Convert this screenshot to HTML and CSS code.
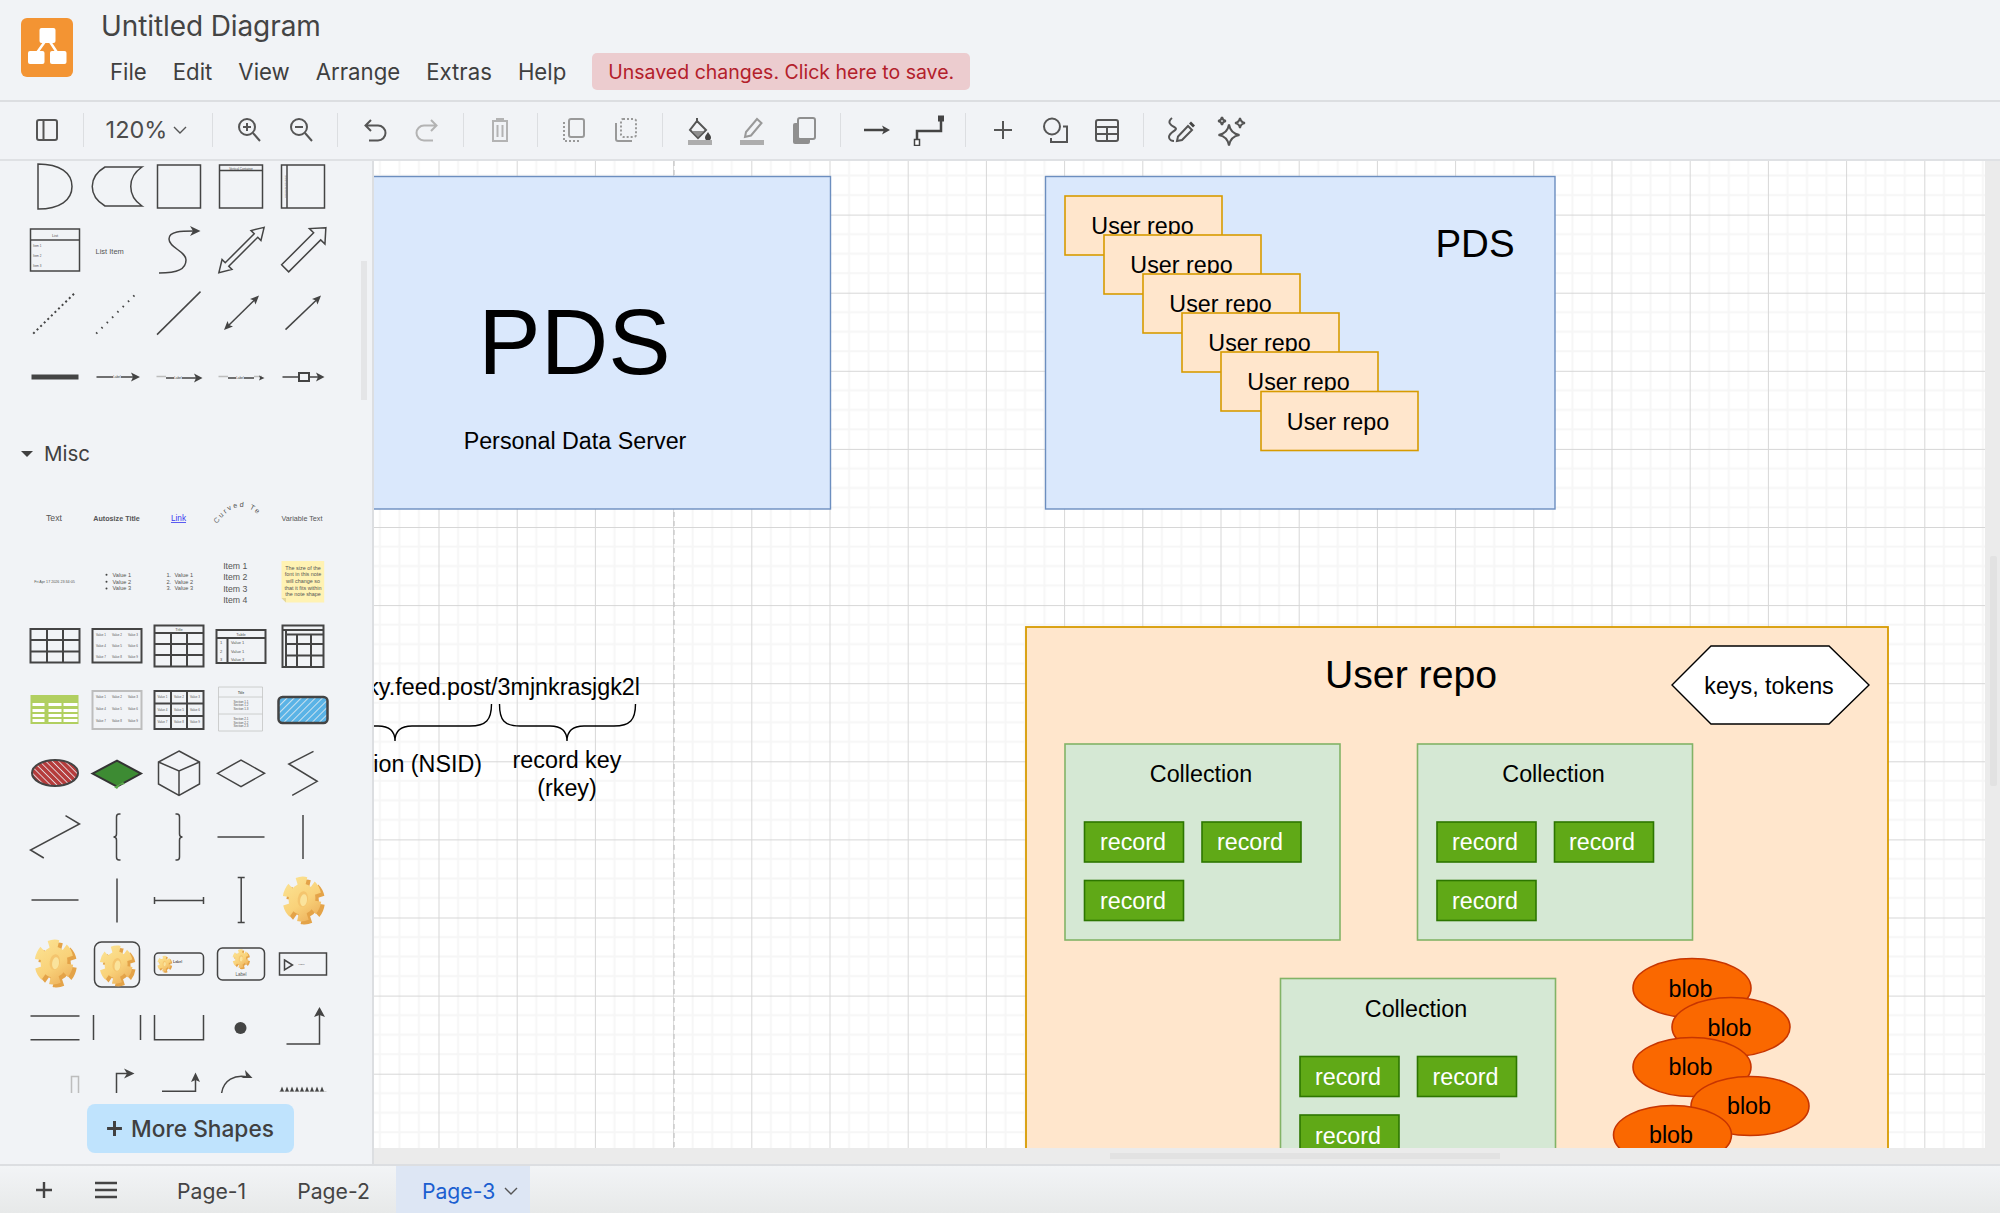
FILE: index.html
```html
<!DOCTYPE html>
<html lang="en">
<head>
<meta charset="utf-8">
<title>Untitled Diagram</title>
<link rel="stylesheet" href="styles.css">
</head>
<body>
<svg class="defs" width="0" height="0" aria-hidden="true">
  <defs>
    <linearGradient id="gearGrad" gradientUnits="userSpaceOnUse" x1="-14" y1="-18" x2="16" y2="18">
      <stop offset="0" stop-color="#fbe08f"/><stop offset=".55" stop-color="#f9d27a"/><stop offset="1" stop-color="#eeb45e"/>
    </linearGradient>
    <symbol id="gear" viewBox="-24 -24 48 48" overflow="visible">
      <g transform="translate(2.500 2) rotate(8) scale(.86 1)">
        <circle r="18" class="gear-teeth dark-gear"/>
        <circle r="15.500" class="gear-dark"/>
      </g>
      <g transform="translate(-1 -1) rotate(8) scale(.86 1)">
        <circle r="18" class="gear-teeth"/>
        <circle r="15.500" class="gear-body"/>
        <ellipse cx="1" cy="0" rx="6" ry="8" class="gear-hole"/>
        <ellipse cx="2" cy="1" rx="4" ry="6" class="gear-hole-in"/>
      </g>
    </symbol>
    <pattern id="hatchBlue" width="5" height="5" patternUnits="userSpaceOnUse" patternTransform="rotate(45)">
      <rect width="5" height="5" class="hatch-blue"/><rect width=".8" height="5" class="hatch-line"/>
    </pattern>
    <pattern id="hatchRed" width="4.500" height="4.500" patternUnits="userSpaceOnUse" patternTransform="rotate(-45)">
      <rect width="4.500" height="4.500" class="hatch-red"/><rect width=".8" height="4.500" class="hatch-line"/>
    </pattern>
    <pattern id="grid" x="438.5" y="292.7" width="78.2" height="78.1" patternUnits="userSpaceOnUse">
      <path class="grid-minor" d="M19.55 0V78.1M39.1 0V78.1M58.65 0V78.1M0 19.52H78.2M0 39.05H78.2M0 58.57H78.2"/>
      <path class="grid-major" d="M.3 0V78.1M0 .3H78.2"/>
    </pattern>
  </defs>
</svg>
<div class="app">
  <header class="header">
    <svg class="logo" viewBox="0 0 52 59">
      <rect width="52" height="59" rx="6" class="logo-bg"/>
      <path class="logo-line" d="M26.5 20 15 36M26.5 20 37 36"/>
      <rect x="18.5" y="10" width="16" height="15" rx="2" class="logo-node"/>
      <rect x="7" y="33" width="16.5" height="13" rx="2" class="logo-node"/>
      <rect x="29" y="33" width="16.5" height="13" rx="2" class="logo-node"/>
    </svg>
    <div class="titles">
      <div class="doc-title">Untitled Diagram</div>
      <nav class="menu">
        <span>File</span><span>Edit</span><span>View</span><span>Arrange</span><span>Extras</span><span>Help</span>
        <span class="unsaved">Unsaved changes. Click here to save.</span>
      </nav>
    </div>
  </header>

  <div class="toolbar">
    <div class="tgroup first">
      <svg class="ic" viewBox="0 0 32 32"><rect x="6" y="6" width="20" height="20" rx="2" class="i"/><path class="i" d="M12.5 6V26"/></svg>
    </div>
    <i class="sep"></i>
    <div class="tgroup zoomgroup"><span>120%</span>
      <svg class="chev" viewBox="0 0 14 8"><path d="M1 1 7 7 13 1" class="i thin"/></svg>
    </div>
    <i class="sep"></i>
    <div class="tgroup">
      <svg class="ic" viewBox="0 0 32 32"><circle cx="14" cy="13" r="8" class="i"/><path class="i" d="M20 19 27 27M14 9V17M10 13H18"/></svg>
      <svg class="ic" viewBox="0 0 32 32"><circle cx="14" cy="13" r="8" class="i"/><path class="i" d="M20 19 27 27M10 13H18"/></svg>
    </div>
    <i class="sep"></i>
    <div class="tgroup">
      <svg class="ic" viewBox="0 0 32 32"><path class="i" d="M12 6 6.500 11.500 12 17M7 11.500H19A7.500 7.500 0 0 1 19 26.500H10"/></svg>
      <svg class="ic" viewBox="0 0 32 32"><path class="i off" d="M20 6 25.500 11.500 20 17M25 11.500H13A7.500 7.500 0 0 0 13 26.500H22"/></svg>
    </div>
    <i class="sep"></i>
    <div class="tgroup">
      <svg class="ic" viewBox="0 0 32 32"><path class="i off" d="M8 7H24M13 7V5H19V7M9 7H23V27H9ZM13.500 11V23M18.500 11V23"/></svg>
    </div>
    <i class="sep"></i>
    <div class="tgroup">
      <svg class="ic" viewBox="0 0 32 32"><rect x="11" y="5" width="15" height="18" rx="2" class="i mid"/><path class="i mid dots" d="M6 8V27H22"/></svg>
      <svg class="ic" viewBox="0 0 32 32"><path class="i mid" d="M6 9V25A2 2 0 0 0 8 27H22"/><rect x="11" y="5" width="15" height="18" rx="2" class="i mid dots"/></svg>
    </div>
    <i class="sep"></i>
    <div class="tgroup">
      <svg class="ic" viewBox="0 0 32 32"><path class="i" d="M13 4V9"/><path d="M13 7 22 16 14 24 6 16Z" class="i"/><path d="M8 17H20L14 23Z" class="fill-mid"/><path d="M24 18C26 21 27 22 27 23.500A3 3 0 0 1 21 23.500C21 22 22 21 24 18Z" class="fill-dark"/><rect x="4" y="26" width="24" height="5" class="fill-bar"/></svg>
      <svg class="ic" viewBox="0 0 32 32"><path class="i mid" d="M9 23 10 18 21 5 25.500 9 15 21.500Z"/><rect x="4" y="26" width="24" height="5" class="fill-bar"/></svg>
      <svg class="ic" viewBox="0 0 32 32"><rect x="5" y="9" width="17" height="21" rx="2" class="fill-mid"/><rect x="10" y="4" width="17" height="21" rx="2" class="shadow-front"/></svg>
    </div>
    <i class="sep"></i>
    <div class="tgroup">
      <svg class="ic" viewBox="0 0 32 32"><path class="i dark" d="M3 16H24"/><path class="fill-dark" d="M29 16 21 11.500 23 16 21 20.500Z"/></svg>
      <svg class="ic" viewBox="0 0 32 32"><path class="i dark" d="M4 29V17H28V4"/><rect x="25" y="1.500" width="6" height="6" class="fill-dark"/><rect x="1.500" y="25.500" width="5" height="6" class="fill-outline"/></svg>
    </div>
    <i class="sep"></i>
    <div class="tgroup">
      <svg class="ic" viewBox="0 0 32 32"><path class="i" d="M16 7V25M7 16H25"/></svg>
      <svg class="ic" viewBox="0 0 32 32"><circle cx="13" cy="12.500" r="8" class="i"/><path class="i" d="M24 12.500H28V28H12V24"/></svg>
      <svg class="ic" viewBox="0 0 32 32"><rect x="5" y="6" width="22" height="21" rx="2" class="i"/><path class="i" d="M5 13H27M5 20H27M16 13V27"/></svg>
    </div>
    <i class="sep"></i>
    <div class="tgroup">
      <svg class="ic" viewBox="0 0 32 32"><path class="i" d="M8 4C3 8 6 11 11 13.500C15 16 5 18 5 23C5 26 8 27 10 27"/><path class="i" d="M13 27 14 22.500 24 12 28 16 18 26Z"/><path class="fill-dark" d="M25 9.500 27 7.500 31 11.500 29 13.500Z"/></svg>
      <svg class="ic" viewBox="0 0 32 32"><path class="i" d="M13 10.500Q14.500 19.500 23.500 21Q14.500 22.500 13 31.500Q11.500 22.500 2.500 21Q11.500 19.500 13 10.500Z"/><path class="i" d="M6 3Q6.500 6.500 10 7Q6.500 7.500 6 11Q5.500 7.500 2 7Q5.500 6.500 6 3Z"/><path class="i" d="M24 4Q24.700 8.300 29 9Q24.700 9.700 24 14Q23.300 9.700 19 9Q23.300 8.300 24 4Z"/></svg>
    </div>
  </div>

  <main class="main">
    <aside class="sidebar">
      <div class="shapes">
        <div class="grid-shapes first-grid">
          <svg viewBox="0 0 62 64"><path class="s" d="M14 9C36 9 48 18 48 31.500 48 45 36 54 14 54Z"/></svg>
          <svg viewBox="0 0 62 64"><path class="s" d="M19 12H56C41 22 41 41 56 51H19C2 41 2 22 19 12Z"/></svg>
          <svg viewBox="0 0 62 64"><rect class="s" x="9.500" y="10" width="43" height="43"/></svg>
          <svg viewBox="0 0 62 64"><rect class="s" x="9.500" y="10" width="43" height="43"/><path class="s" d="M9.500 15.500H52.500"/><text x="31" y="14.500" class="tx t3 mid-a">Vertical Container</text></svg>
          <svg viewBox="0 0 62 64"><rect class="s" x="9.500" y="10" width="43" height="43"/><path class="s" d="M15 10V53"/><text x="13.800" y="31.500" transform="rotate(-90 13.800 31.500)" class="tx t25 mid-a">Horizontal Container</text></svg>

          <svg viewBox="0 0 62 64"><rect class="s" x="6.500" y="10" width="49" height="42"/><path class="s" d="M6.500 21H55.500"/><text x="31" y="17.500" class="tx t4 mid-a">List</text><text x="9" y="27.500" class="tx t3">Item 1</text><text x="9" y="37.500" class="tx t3">Item 2</text><text x="9" y="47.500" class="tx t3">Item 3</text></svg>
          <svg viewBox="0 0 62 64"><text x="9.500" y="34.500" class="tx t75">List Item</text></svg>
          <svg viewBox="0 0 62 64"><path class="s" d="M11 54C30 54 38 50 38 41 38 32 21 29 21 20 21 12 34 12 46 12"/><path class="f" d="M52.500 12 42 7 45 12 42 17Z"/></svg>
          <svg viewBox="0 0 62 64"><path class="s" transform="rotate(-45 31.500 31)" d="M63.500 31 52 24V28.500H11V24L-.5 31 11 38V33.500H52V38Z"/></svg>
          <svg viewBox="0 0 62 64"><path class="s" transform="rotate(-45 33.500 29)" d="M62.300 29 50 18V24H4.700V34H50V40Z"/></svg>

          <svg viewBox="0 0 62 64"><path class="s dot1" d="M9.200 51.600 51.500 10.300"/></svg>
          <svg viewBox="0 0 62 64"><path class="s dot2" d="M10.200 51.600 49 12.800"/></svg>
          <svg viewBox="0 0 62 64"><path class="s" d="M9 52.600 52.500 9.600"/></svg>
          <svg viewBox="0 0 62 64"><path class="s" d="M18 44 45 17.500"/><path class="f" d="M49 13.600 40 17 44 18.500 45.500 22.500ZM14 48 23 44.500 19 43 17.500 39Z"/></svg>
          <svg viewBox="0 0 62 64"><path class="s" d="M13.500 47.600 45 17.500"/><path class="f" d="M49 13.600 40 17 44 18.500 45.500 22.500Z"/></svg>

          <svg viewBox="0 0 62 64"><path class="s thick" d="M7.500 31H54.500"/></svg>
          <svg viewBox="0 0 62 64"><path class="s" d="M10.500 31H27M35 31H48"/><path class="f" d="M54 31 45 26.500 47 31 45 35.500Z"/><text x="31" y="32" class="tx t3 dk mid-a">Label</text></svg>
          <svg viewBox="0 0 62 64"><path class="s" d="M18 32H26M34 32H48"/><path class="f" d="M54.500 32 46 27.500 48 32 46 36.500Z"/><path class="s light" d="M8.500 30.500H18"/><text x="30" y="33" class="tx t3 dk mid-a">Label</text></svg>
          <svg viewBox="0 0 62 64"><path class="s" d="M18 32H26M34 32H44"/><path class="s light" d="M8.500 30.500H18M44 30.500H52"/><path class="f" d="M54.500 32 49 29.500 50 32 49 34.500Z"/><text x="30" y="33" class="tx t3 dk mid-a">Label</text></svg>
          <svg viewBox="0 0 62 64"><path class="s" d="M10.500 31H27M37 31H47"/><rect class="s box" x="27" y="27" width="10" height="8"/><path class="f" d="M52.500 31 44 26.500 46 31 44 35.500Z"/></svg>
        </div>

        <div class="section-head"><i class="caret"></i><span>Misc</span></div>

        <div class="grid-shapes">
          <svg viewBox="0 0 62 64"><text x="30" y="35" class="tx t87 mid-a">Text</text></svg>
          <svg viewBox="0 0 62 64"><text x="30.500" y="35" class="tx t7 bold mid-a">Autosize Title</text></svg>
          <svg viewBox="0 0 62 64"><text x="30.500" y="35" class="tx t8 mid-a link">Link</text></svg>
          <svg viewBox="0 0 62 64"><path id="curve" class="nofill" d="M7 38Q31 2 60 42"/><text class="tx t7 spaced"><textPath href="#curve">Curved Te</textPath></text></svg>
          <svg viewBox="0 0 62 64"><text x="30" y="35" class="tx t7 mid-a">Variable Text</text></svg>

          <svg viewBox="0 0 62 64"><text x="30.500" y="33.500" class="tx t37 mid-a">Fri Apr 17 2026 23:34:05</text></svg>
          <svg viewBox="0 0 62 64"><circle cx="20.500" cy="25.700" r="1" class="f"/><circle cx="20.500" cy="32.700" r="1" class="f"/><circle cx="20.500" cy="39.400" r="1" class="f"/><text x="26.500" y="27.700" class="tx t56">Value 1</text><text x="26.500" y="34.700" class="tx t56">Value 2</text><text x="26.500" y="41.400" class="tx t56">Value 3</text></svg>
          <svg viewBox="0 0 62 64"><text x="18.500" y="27.700" class="tx t56">1.</text><text x="18.500" y="34.700" class="tx t56">2.</text><text x="18.500" y="41.400" class="tx t56">3.</text><text x="26.500" y="27.700" class="tx t56">Value 1</text><text x="26.500" y="34.700" class="tx t56">Value 2</text><text x="26.500" y="41.400" class="tx t56">Value 3</text></svg>
          <svg viewBox="0 0 62 64"><text x="13.200" y="20" class="tx t87">Item 1</text><text x="13.200" y="31" class="tx t87">Item 2</text><text x="13.200" y="42.500" class="tx t87">Item 3</text><text x="13.200" y="53.500" class="tx t87">Item 4</text></svg>
          <svg viewBox="0 0 62 64"><path class="note" d="M9.500 12H52.200V53.400H14L9.500 49Z"/><path class="note-fold" d="M9.500 49H14V53.400Z"/><text x="31" y="20.500" class="tx t54 mid-a">The size of the</text><text x="31" y="27.200" class="tx t54 mid-a">font in this note</text><text x="31" y="33.900" class="tx t54 mid-a">will change so</text><text x="31" y="40.500" class="tx t54 mid-a">that it fits within</text><text x="31" y="47.200" class="tx t54 mid-a">the note shape</text></svg>

          <svg viewBox="0 0 62 64"><path class="s tb" d="M6.500 16H55.500V49.500H6.500ZM6.500 27H55.500M6.500 38.500H55.500M23 16V49.500M39 16V49.500"/></svg>
          <svg viewBox="0 0 62 64"><rect class="s tb" x="6.500" y="16" width="49" height="33.500"/><g class="tx t3"><text x="10" y="23">Value 1</text><text x="26" y="23">Value 2</text><text x="42" y="23">Value 3</text><text x="10" y="34">Value 4</text><text x="26" y="34">Value 5</text><text x="42" y="34">Value 6</text><text x="10" y="44.500">Value 7</text><text x="26" y="44.500">Value 8</text><text x="42" y="44.500">Value 9</text></g></svg>
          <svg viewBox="0 0 62 64"><path class="s tb" d="M6.500 12.500H55.500V53.500H6.500ZM6.500 20H55.500M6.500 31H55.500M6.500 42H55.500M23 20V53.500M39 20V53.500"/><text x="31" y="18" class="tx t4 mid-a">Title</text></svg>
          <svg viewBox="0 0 62 64"><path class="s tb" d="M6.500 17H55.500V50H6.500ZM6.500 25H55.500M17.500 25V50"/><text x="31" y="23" class="tx t4 mid-a">Table</text><g class="tx t4"><text x="10" y="31">1</text><text x="21" y="31">Value 1</text><text x="10" y="40">2</text><text x="21" y="40">Value 1</text><text x="10" y="47.500">3</text><text x="21" y="47.500">Value 3</text></g></svg>
          <svg viewBox="0 0 62 64"><path class="s tb" d="M10.500 12.500H51.500V54H10.500ZM10.500 17H51.500M14 21.500H51.500M14 31H51.500M14 42.500H51.500M14 17V54M25 21.500V54M39 21.500V54"/></svg>

          <svg viewBox="0 0 62 64"><rect x="6.500" y="18" width="48" height="29" class="green-tb"/><g class="white-cells"><path d="M8.500 26H20.500V29H8.500ZM24.500 26H37.500V29H24.500ZM39.500 26H53.500V29H39.500ZM8.500 32H20.500V35H8.500ZM24.500 32H37.500V35H24.500ZM39.500 32H53.500V35H39.500ZM8.500 37H20.500V40H8.500ZM24.500 37H37.500V40H24.500ZM39.500 37H53.500V40H39.500ZM8.500 42H20.500V45H8.500ZM24.500 42H37.500V45H24.500ZM39.500 42H53.500V45H39.500Z"/></g></svg>
          <svg viewBox="0 0 62 64"><rect class="s tb light" x="6.500" y="14" width="49" height="38"/><g class="tx t3"><text x="10" y="21">Value 1</text><text x="26" y="21">Value 2</text><text x="42" y="21">Value 3</text><text x="10" y="33">Value 4</text><text x="26" y="33">Value 5</text><text x="42" y="33">Value 6</text><text x="10" y="45">Value 7</text><text x="26" y="45">Value 8</text><text x="42" y="45">Value 9</text></g></svg>
          <svg viewBox="0 0 62 64"><path class="s tb" d="M6.500 14H55.500V52H6.500ZM6.500 26.500H55.500M6.500 39H55.500M23 14V52M39 14V52"/><g class="tx t3"><text x="9.500" y="21">Value 1</text><text x="26" y="21">Value 2</text><text x="42" y="21">Value 3</text><text x="9.500" y="33.500">Value 4</text><text x="26" y="33.500">Value 5</text><text x="42" y="33.500">Value 6</text><text x="9.500" y="46">Value 7</text><text x="26" y="46">Value 8</text><text x="42" y="46">Value 9</text></g></svg>
          <svg viewBox="0 0 62 64"><path class="s hair" d="M8.500 10H52.500V54H8.500ZM8.500 20H52.500M8.500 37H52.500"/><text x="31" y="16.500" class="tx t3 bold mid-a">Title</text><g class="tx t3 mid-a"><text x="31" y="25.500">Section 1.1</text><text x="31" y="29">Section 1.2</text><text x="31" y="32.500">Section 1.3</text><text x="31" y="43">Section 2.1</text><text x="31" y="46.500">Section 2.2</text><text x="31" y="50">Section 2.3</text></g></svg>
          <svg viewBox="0 0 62 64"><rect x="6.500" y="20" width="49" height="26" rx="4" class="sketch-blue"/></svg>

          <svg viewBox="0 0 62 64"><ellipse cx="31" cy="33" rx="23" ry="13" class="sketch-red"/></svg>
          <svg viewBox="0 0 62 64"><path class="sketch-green" d="M6.500 33.600 31 20.600 55 33.600 31 46.600Z"/><path class="green-edge" d="M28 47 31 49 34 45 39 44 37 42Z"/></svg>
          <svg viewBox="0 0 62 64"><path class="s" d="M31 11 51.500 22V44L31 55.500 10.500 44V22ZM10.500 22 31 31 51.500 22M31 31V55.500"/></svg>
          <svg viewBox="0 0 62 64"><path class="s" d="M7.500 33.300 31 20 54.500 33.300 31 46.600Z"/></svg>
          <svg viewBox="0 0 62 64"><path class="s" d="M41.500 11.300 16.800 24 45.200 41.300 20.200 55.300"/></svg>

          <svg viewBox="0 0 62 64"><path class="s" d="M41.500 11.700 55.500 20 6.500 46 19.800 54"/></svg>
          <svg viewBox="0 0 62 64"><path class="s" d="M34.500 10H33Q30.500 10 30.500 13V30Q30.500 33 27.500 33 30.500 33 30.500 36V53Q30.500 56 33 56H34.500"/></svg>
          <svg viewBox="0 0 62 64"><path class="s" d="M27.500 10H29Q31.500 10 31.500 13V30Q31.500 33 34.500 33 31.500 33 31.500 36V53Q31.500 56 29 56H27.500"/></svg>
          <svg viewBox="0 0 62 64"><path class="s" d="M7.500 33H54.500"/></svg>
          <svg viewBox="0 0 62 64"><path class="s" d="M31 11V55"/></svg>

          <svg viewBox="0 0 62 64"><path class="s" d="M7.500 33H54.500"/></svg>
          <svg viewBox="0 0 62 64"><path class="s" d="M31 11.500V55.500"/></svg>
          <svg viewBox="0 0 62 64"><path class="s" d="M6.500 33.500H55.500M6.500 30V37M55.500 30V37"/></svg>
          <svg viewBox="0 0 62 64"><path class="s" d="M31.200 10.500V55.500M27.700 10.500H34.700M27.700 55.500H34.700"/></svg>
          <svg viewBox="0 0 62 64"><use href="#gear" x="7" y="9" width="48" height="48"/></svg>

          <svg viewBox="0 0 62 64"><use href="#gear" x="7" y="8" width="48" height="48"/></svg>
          <svg viewBox="0 0 62 64"><rect class="s" x="8.500" y="11" width="45" height="45" rx="7"/><use href="#gear" x="10.500" y="14" width="41" height="41"/></svg>
          <svg viewBox="0 0 62 64"><rect class="s" x="6.500" y="22" width="49" height="22" rx="4"/><use href="#gear" x="8" y="24.500" width="17" height="17"/><text x="25" y="32" class="tx t35 bold">Label</text></svg>
          <svg viewBox="0 0 62 64"><rect class="s" x="7.500" y="17" width="47" height="32" rx="5"/><use href="#gear" x="21" y="18" width="20" height="20"/><text x="31" y="44.500" class="tx t45 mid-a">Label</text></svg>
          <svg viewBox="0 0 62 64"><rect class="s" x="7.500" y="22" width="47" height="22"/><path class="s" d="M12.500 29 20.500 34 12.500 39Z"/><text x="26.500" y="34" class="tx t25">Label</text></svg>

          <svg viewBox="0 0 62 64"><path class="s" d="M6.500 21H55.500M6.500 44.700H55.500"/></svg>
          <svg viewBox="0 0 62 64"><path class="s" d="M7.500 20V45M54.500 20V45"/></svg>
          <svg viewBox="0 0 62 64"><path class="s" d="M6.500 20V44.700H55.500V20"/></svg>
          <svg viewBox="0 0 62 64"><circle cx="30.500" cy="33" r="6" class="f"/></svg>
          <svg viewBox="0 0 62 64"><path class="s" d="M14.500 49H47.500V20"/><path class="f" d="M47.500 12 42 22 47.500 20 53 22Z"/></svg>

          <svg viewBox="0 0 62 64"><path class="s light" d="M47.500 40V18.500H54.500V40"/></svg>
          <svg viewBox="0 0 62 64"><path class="s" d="M30.500 40V15.600H43"/><path class="f" d="M48.500 15.600 38 10.600 41 15.600 38 20.600Z"/></svg>
          <svg viewBox="0 0 62 64"><path class="s" d="M14 33.300H47.500V18"/><path class="f" d="M47.500 14.600 43 24 47.500 22 52 24Z"/></svg>
          <svg viewBox="0 0 62 64"><path class="s" d="M11.500 36C13 22 25 16 38 19"/><path class="f" d="M42.500 20 31 20 36 18 35 12Z"/></svg>
          <svg viewBox="0 0 62 64"><path class="s hair" d="M7 33.500H54.500"/><path class="f" d="M8 33.500 10 28.500 12 33.500ZM13 33.500 15 28.500 17 33.500ZM18 33.500 20 28.500 22 33.500ZM23 33.500 25 28.500 27 33.500ZM28 33.500 30 28.500 32 33.500ZM33 33.500 35 28.500 37 33.500ZM38 33.500 40 28.500 42 33.500ZM43 33.500 45 28.500 47 33.500ZM48 33.500 50 28.500 52 33.500Z"/></svg>
        </div>
      </div>
      <button class="more"><svg class="more-plus" viewBox="0 0 16 16"><path d="M8 1V15M1 8H15"/></svg>More Shapes</button>
      <i class="side-thumb"></i>
    </aside>

    <div class="stage">
      <div class="stage-row">
        <svg class="canvas" viewBox="374 161 1611 987" preserveAspectRatio="xMinYMin slice">
          <rect x="374" y="161" width="1611" height="987" class="paper"/>
          <rect x="374" y="161" width="1611" height="987" fill="url(#grid)"/>
          <path class="pagebreak" d="M674 161V1148"/>

          <rect x="300" y="176.500" width="530.500" height="332.500" class="blue"/>
          <text x="574.500" y="374" class="dt big-pds mid-a">PDS</text>
          <text x="575" y="448.500" class="dt mid-a">Personal Data Server</text>

          <rect x="1045.500" y="176.500" width="509.500" height="332.500" class="blue"/>
          <text x="1475" y="257" class="dt pds mid-a">PDS</text>
          <g class="repo-stack">
            <rect x="1065" y="196" width="157" height="59" class="orange"/><text x="1142.500" y="234" class="dt mid-a">User repo</text>
            <rect x="1104" y="235" width="157" height="59" class="orange"/><text x="1181.500" y="273" class="dt mid-a">User repo</text>
            <rect x="1143" y="274" width="157" height="59" class="orange"/><text x="1220.500" y="312" class="dt mid-a">User repo</text>
            <rect x="1182" y="313" width="157" height="59" class="orange"/><text x="1259.500" y="351" class="dt mid-a">User repo</text>
            <rect x="1221" y="352" width="157" height="59" class="orange"/><text x="1298.500" y="390" class="dt mid-a">User repo</text>
            <rect x="1261" y="391.500" width="157" height="59" class="orange"/><text x="1338" y="429.500" class="dt mid-a">User repo</text>
          </g>

          <text x="640" y="694.500" class="dt end-a">ky.feed.post/3mjnkrasjgk2l</text>
          <path class="brace" d="M300 704C300 720 310 726 330 726H378Q395 726 395 741Q395 726 412 726H470C486 726 491.500 720 491.500 704"/>
          <path class="brace" d="M499.500 704C499.500 720 504 726 520 726H550Q567 726 567 741Q567 726 584 726H614C630 726 635.500 720 635.500 704"/>
          <text x="482" y="771.500" class="dt end-a">ion (NSID)</text>
          <text x="567" y="767.500" class="dt mid-a">record key</text>
          <text x="567" y="795.500" class="dt mid-a">(rkey)</text>

          <rect x="1026" y="627" width="862" height="600" class="orange wide"/>
          <text x="1411" y="688" class="dt title mid-a">User repo</text>
          <path class="hex" d="M1672 685 1711 646H1829L1869 685 1829 724H1711Z"/>
          <text x="1769" y="693.500" class="dt mid-a">keys, tokens</text>

          <rect x="1065" y="744" width="275" height="196" class="green"/>
          <text x="1201" y="781.500" class="dt mid-a">Collection</text>
          <rect x="1084.500" y="822" width="99" height="40" class="rec"/><text x="1133" y="850" class="dt wht mid-a">record</text>
          <rect x="1202" y="822" width="99" height="40" class="rec"/><text x="1250" y="850" class="dt wht mid-a">record</text>
          <rect x="1084.500" y="880.500" width="99" height="40" class="rec"/><text x="1133" y="908.500" class="dt wht mid-a">record</text>

          <rect x="1417.500" y="744" width="275" height="196" class="green"/>
          <text x="1553.500" y="781.500" class="dt mid-a">Collection</text>
          <rect x="1437" y="822" width="99" height="40" class="rec"/><text x="1485" y="850" class="dt wht mid-a">record</text>
          <rect x="1554.500" y="822" width="99" height="40" class="rec"/><text x="1602" y="850" class="dt wht mid-a">record</text>
          <rect x="1437" y="880.500" width="99" height="40" class="rec"/><text x="1485" y="908.500" class="dt wht mid-a">record</text>

          <rect x="1280.500" y="978.500" width="275" height="196" class="green"/>
          <text x="1416" y="1016.500" class="dt mid-a">Collection</text>
          <rect x="1300" y="1056.500" width="99" height="40" class="rec"/><text x="1348" y="1085" class="dt wht mid-a">record</text>
          <rect x="1417.500" y="1056.500" width="99" height="40" class="rec"/><text x="1465.500" y="1085" class="dt wht mid-a">record</text>
          <rect x="1300" y="1115" width="99" height="40" class="rec"/><text x="1348" y="1143.500" class="dt wht mid-a">record</text>

          <ellipse cx="1692" cy="988" rx="59" ry="29.500" class="blob"/><text x="1690.500" y="997" class="dt mid-a">blob</text>
          <ellipse cx="1731" cy="1027" rx="59" ry="29.500" class="blob"/><text x="1729.500" y="1036" class="dt mid-a">blob</text>
          <ellipse cx="1692" cy="1067" rx="59" ry="29.500" class="blob"/><text x="1690.500" y="1075" class="dt mid-a">blob</text>
          <ellipse cx="1750" cy="1106" rx="59" ry="29.500" class="blob"/><text x="1749" y="1114" class="dt mid-a">blob</text>
          <ellipse cx="1672.500" cy="1135" rx="59" ry="29.500" class="blob"/><text x="1671" y="1143" class="dt mid-a">blob</text>
        </svg>
        <div class="vscroll"><i></i></div>
      </div>
      <div class="hscroll"><i></i></div>
    </div>
  </main>

  <footer class="footer">
    <svg class="fic plus" viewBox="0 0 20 20"><path d="M10 2V18M2 10H18"/></svg>
    <svg class="fic burger" viewBox="0 0 24 20"><path d="M1 3H23M1 10H23M1 17H23"/></svg>
    <span class="tab t1">Page-1</span>
    <span class="tab t2">Page-2</span>
    <span class="tab active">Page-3<svg class="chev small" viewBox="0 0 14 8"><path d="M1 1 7 7 13 1"/></svg></span>
  </footer>
</div>
</body>
</html>
```

FILE: styles.css
```css
* { box-sizing: border-box; }
html, body { margin: 0; padding: 0; height: 100%; overflow: hidden; }
body { background: #f1f3f6; color: #404040; font-family: Inter, "Noto Sans", sans-serif; }
.defs { position: absolute; }
.app { display: flex; flex-direction: column; width: 2000px; height: 1213px; }

/* header */
.header { display: flex; height: 102px; padding: 18px 0 0 21px; border-bottom: 2px solid #dcdee1; flex: none; }
.logo { width: 52px; height: 59px; flex: none; }
.logo-bg { fill: #f39433; }
.logo-node { fill: #fff; }
.logo-line { stroke: #fff; stroke-width: 2.5; fill: none; }
.titles { margin-left: 28px; margin-top: -7px; }
.doc-title { font-size: 28px; line-height: 30px; height: 38px; color: #444; letter-spacing: -.1px; }
.menu { display: flex; align-items: center; gap: 26px; padding-left: 9px; font-size: 22.2px; color: #3f3f3f; height: 37px; margin-top: 4px; }
.unsaved { height: 37px; padding: 0 16px; display: flex; align-items: center; background: #eccccf; color: #b3202b; border-radius: 5px; font-size: 19.5px; white-space: nowrap; }

/* toolbar */
.toolbar { display: flex; align-items: center; height: 59px; padding: 0 0 2px 21px; border-bottom: 2px solid #dfe1e4; flex: none; }
.tgroup { display: flex; align-items: center; }
.ic { width: 52px; height: 32px; flex: none; }
.sep { width: 1px; height: 34px; background: #dcdee1; margin: 0 10.3px; flex: none; }
.zoomgroup { width: 107px; padding-left: 11px; font-size: 23.5px; color: #4c4c4c; gap: 6px; }
.chev { width: 14px; height: 8px; }
.i { fill: none; stroke: #555; stroke-width: 2; }
.i.thin { stroke-width: 1.4; }
.i.off { stroke: #b3b3b3; }
.i.mid { stroke: #999; }
.i.dark { stroke: #444; stroke-width: 2.5; }
.dots { stroke-dasharray: 2 2; }
.fill-mid { fill: #8f8f8f; }
.fill-dark { fill: #444; }
.fill-bar { fill: #adadad; }
.fill-outline { fill: #fff; stroke: #444; stroke-width: 1.5; }
.shadow-front { fill: #f1f3f6; stroke: #8f8f8f; stroke-width: 2; }

/* layout */
.main { display: flex; flex: 1; min-height: 0; }
.sidebar { position: relative; width: 374px; border-right: 2px solid #dcdee1; flex: none; }
.shapes { height: 932px; overflow: hidden; }
.grid-shapes { display: grid; grid-template-columns: repeat(5, 62px); grid-auto-rows: 63.6px; padding-left: 23.5px; }
.grid-shapes svg { width: 62px; height: 64px; display: block; overflow: visible; }
.first-grid { margin-top: -6px; }
.section-head { display: flex; align-items: center; height: 76.4px; padding: 12px 0 0 21px; font-size: 20.5px; color: #404040; gap: 11px; }
.caret { width: 0; height: 0; border-left: 6.5px solid transparent; border-right: 6.5px solid transparent; border-top: 6px solid #404040; }
.more { display: flex; align-items: center; justify-content: center; gap: 8px; width: 207px; height: 49px; margin: 11px 0 0 86.5px; border: 0; border-radius: 8px; background: #bfe3fd; color: #404040; font: 500 22.7px Inter, sans-serif; padding: 0; }
.more-plus { width: 17px; height: 17px; fill: none; stroke: #404040; stroke-width: 2.8; }
.side-thumb { position: absolute; left: 361px; top: 100px; width: 6px; height: 139px; background: #e4e5e7; }

/* sidebar shape styling */
.s { fill: none; stroke: #444; stroke-width: 1.5; }
.s.thick { stroke-width: 5; }
.s.tb { stroke-width: 2; }
.s.light { stroke: #bdbdbd; }
.s.hair { stroke: #c4c4c4; stroke-width: .8; }
.s.box { stroke-width: 2; }
.dot1 { stroke-width: 2; stroke-dasharray: 2 3; }
.dot2 { stroke-width: 2; stroke-dasharray: 1.5 6; }
.f { fill: #444; }
.nofill { fill: none; }
.tx { font-family: "Liberation Sans", Arial, sans-serif; fill: #555; }
.tx.dk { fill: #333; }
.t25 { font-size: 2.5px; } .t3 { font-size: 3px; } .t35 { font-size: 3.5px; } .t37 { font-size: 3.7px; }
.t4 { font-size: 4px; } .t45 { font-size: 4.5px; } .t54 { font-size: 5.4px; } .t56 { font-size: 5.6px; }
.t7 { font-size: 7.2px; } .t75 { font-size: 7.5px; } .t8 { font-size: 8.2px; } .t87 { font-size: 8.7px; }
.bold { font-weight: 700; }
.mid-a { text-anchor: middle; }
.end-a { text-anchor: end; }
.link { fill: #3a3af0; text-decoration: underline; }
.spaced { letter-spacing: 2px; }
.note { fill: #fff2b3; }
.note-fold { fill: #e4d79a; }
.green-tb { fill: #b1cf60; }
.white-cells { fill: #fff; }
.sketch-blue { fill: url(#hatchBlue); stroke: #444; stroke-width: 2.5; }
.sketch-red { fill: url(#hatchRed); stroke: #444; stroke-width: 2; }
.sketch-green { fill: #3d8b33; stroke: #333; stroke-width: 2; }
.green-edge { fill: #5aa84a; }
.hatch-blue { fill: #5ab3e6; }
.hatch-red { fill: #b53c3c; }
.hatch-line { fill: #e9eef2; }
.gear-teeth { fill: none; stroke: url(#gearGrad); stroke-width: 9; stroke-dasharray: 11 7.850; }
.gear-teeth.dark-gear { stroke: #e4a348; }
.gear-dark { fill: #e4a348; }
.gear-body { fill: url(#gearGrad); }
.gear-hole { fill: #f4c56e; }
.gear-hole-in { fill: #fae39c; }

/* stage */
.stage { flex: 1; display: flex; flex-direction: column; min-width: 0; background: #ebebeb; }
.stage-row { display: flex; flex: 1; min-height: 0; }
.canvas { display: block; width: 1611px; height: 987px; flex: none; }
.paper { fill: #fff; }
.grid-minor { stroke: #f6f6f6; stroke-width: 2; fill: none; }
.grid-major { stroke: #d6d6d6; stroke-width: 1.3; fill: none; }
.pagebreak { stroke: #c8c8c8; stroke-width: 1.3; stroke-dasharray: 5 4; fill: none; }
.vscroll { width: 15px; flex: none; padding: 395px 3px 0 5px; }
.vscroll i { display: block; height: 230px; background: #e2e2e2; border-radius: 2px; }
.hscroll { height: 16px; flex: none; padding: 5px 0 0 736px; }
.hscroll i { display: block; width: 390px; height: 6px; background: #e2e2e2; }

/* diagram */
.dt { font-family: "Liberation Sans", Arial, sans-serif; font-size: 23.3px; fill: #000; }
.big-pds { font-size: 93.5px; }
.pds { font-size: 38.5px; }
.title { font-size: 39.2px; }
.wht { fill: #fff; }
.blue { fill: #dae8fc; stroke: #6c8ebf; stroke-width: 1.4; }
.orange { fill: #ffe6cc; stroke: #d79b00; stroke-width: 1.6; }
.wide { stroke-width: 1.8; }
.green { fill: #d5e8d4; stroke: #82b366; stroke-width: 1.6; }
.rec { fill: #60a917; stroke: #2d7600; stroke-width: 1.6; }
.blob { fill: #fa6800; stroke: #c73500; stroke-width: 1.6; }
.hex { fill: #fff; stroke: #000; stroke-width: 1.4; }
.brace { fill: none; stroke: #000; stroke-width: 1.4; }

/* footer */
.footer { display: flex; align-items: center; height: 49px; flex: none; border-top: 2px solid #dcdee1; background: linear-gradient(#f2f4f6, #e7e9e9); font-size: 21.2px; color: #444; }
.fic { fill: none; stroke: #444; stroke-width: 2.4; flex: none; }
.plus { width: 20px; height: 20px; margin-left: 34px; }
.burger { width: 24px; height: 20px; margin-left: 40px; }
.tab { white-space: nowrap; padding-top: 2px; }
.t1 { margin-left: 59px; }
.t2 { margin-left: 51px; }
.active { display: flex; align-items: center; gap: 9px; height: 47px; width: 134px; margin-left: 26px; padding-left: 26px; background: #dde6f4; color: #1b5fd0; }
.chev.small { fill: none; stroke: #555; stroke-width: 1.4; width: 14px; height: 8px; }
```
